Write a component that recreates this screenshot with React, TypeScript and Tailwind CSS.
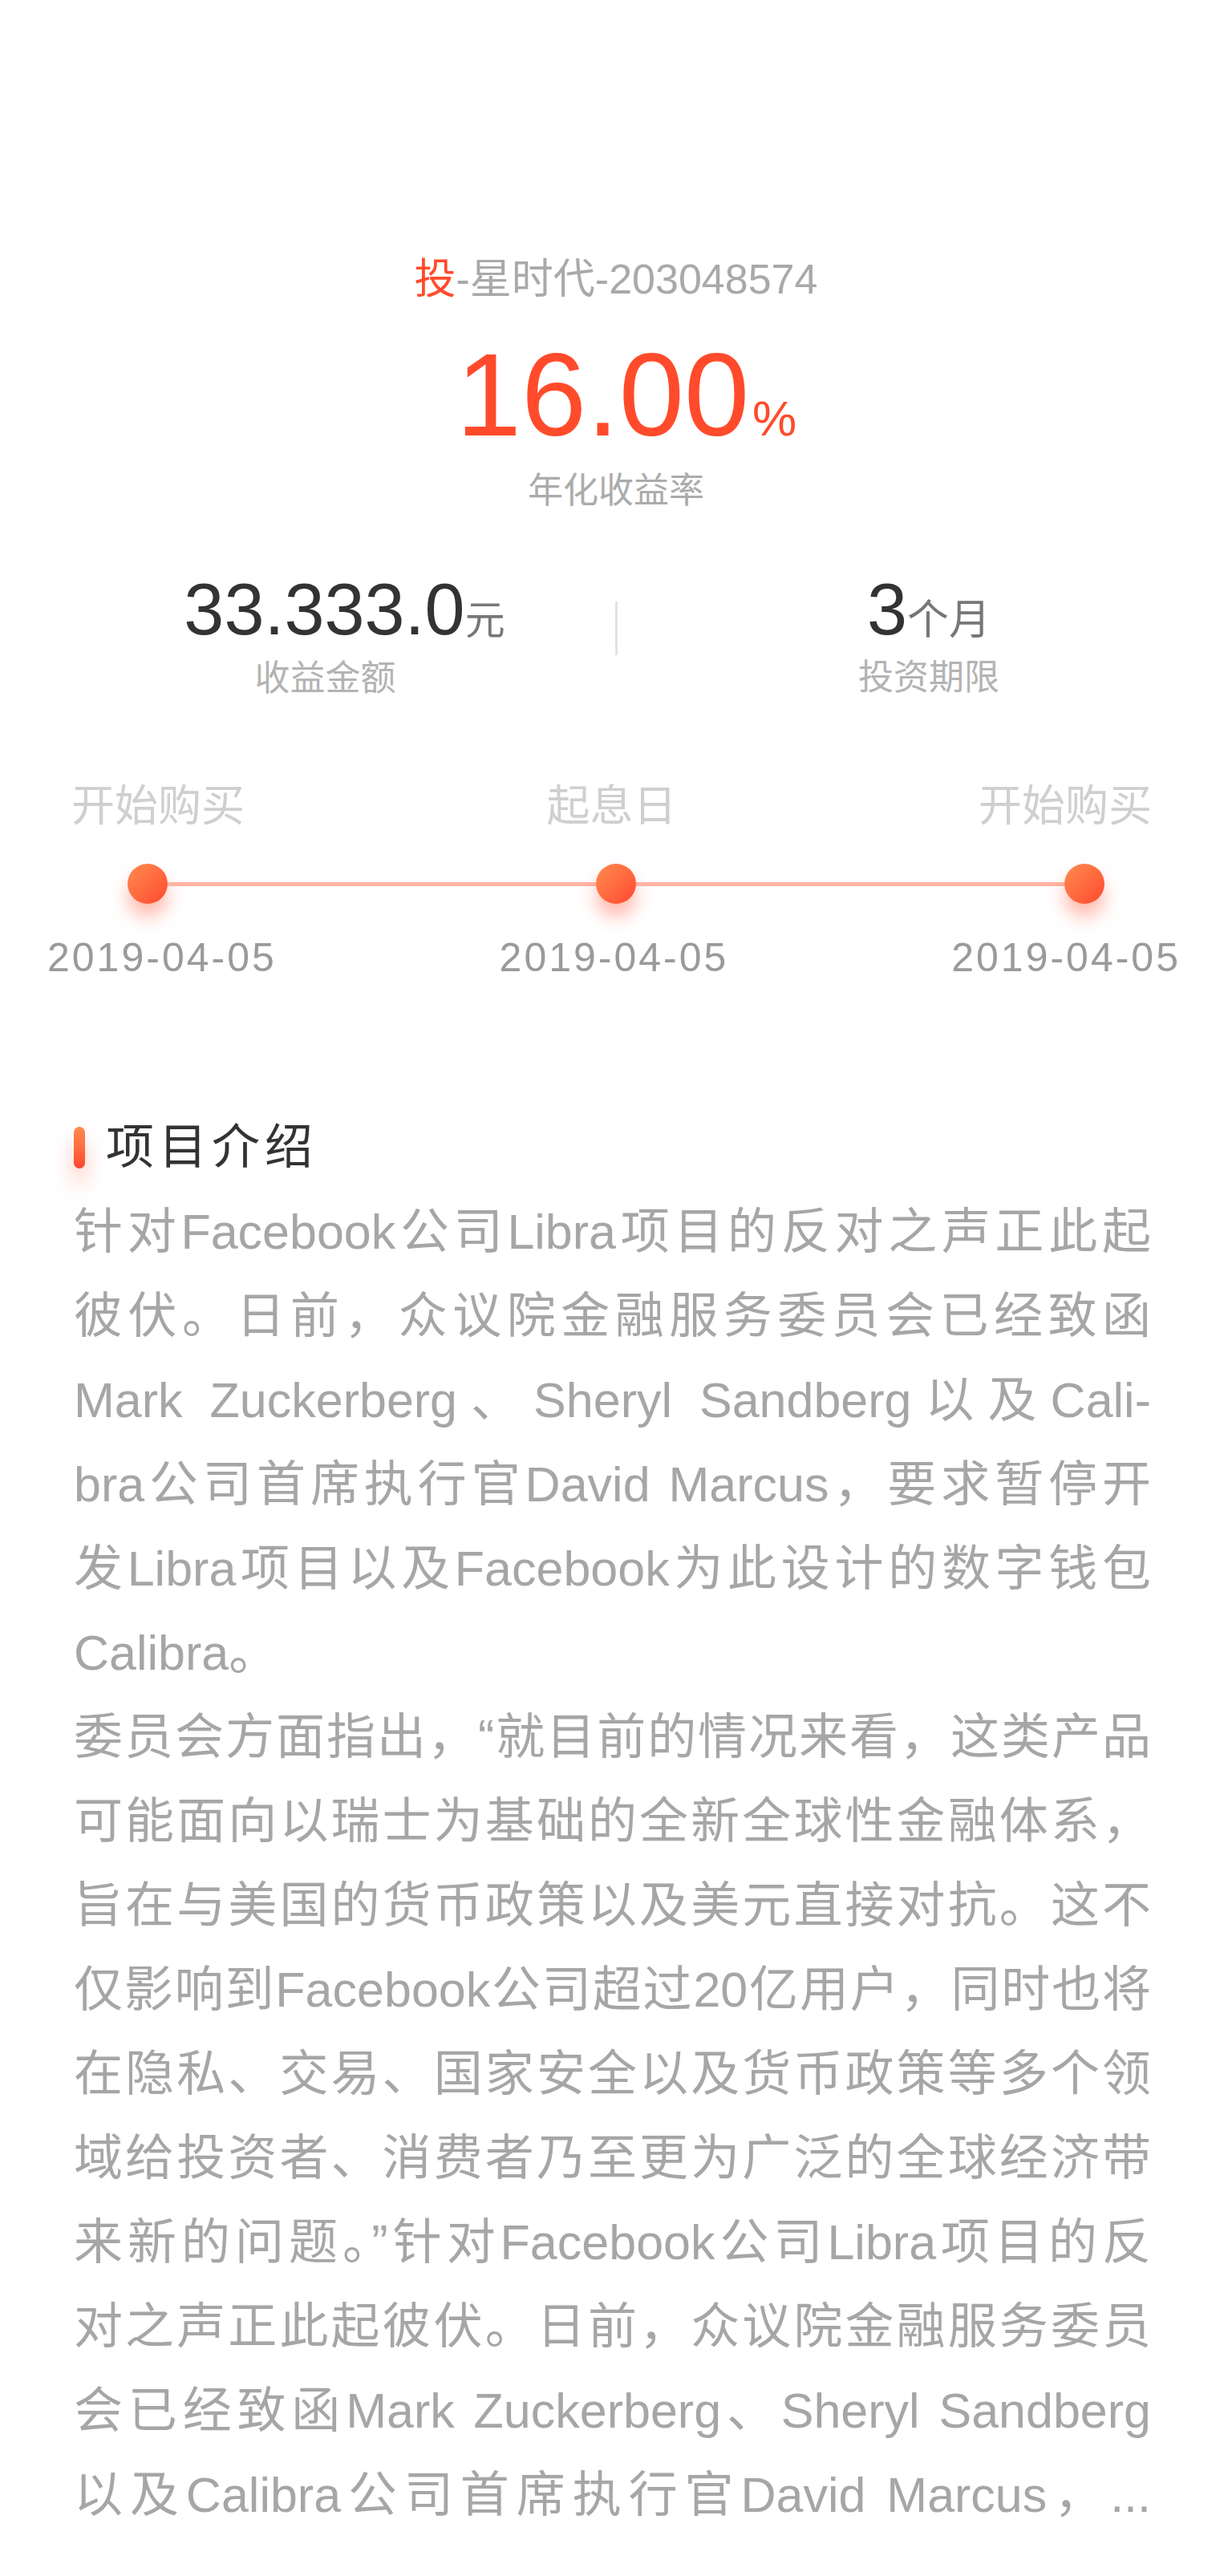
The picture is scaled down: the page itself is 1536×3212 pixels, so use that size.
const body: { text: string; last?: boolean }[] = [
  { text: "针对Facebook公司Libra项目的反对之声正此起" },
  { text: "彼伏。日前，众议院金融服务委员会已经致函" },
  { text: "Mark Zuckerberg、Sheryl Sandberg以及Cali-" },
  { text: "bra公司首席执行官David Marcus，要求暂停开" },
  { text: "发Libra项目以及Facebook为此设计的数字钱包" },
  { text: "Calibra。", last: true },
  { text: "委员会方面指出，“就目前的情况来看，这类产品" },
  { text: "可能面向以瑞士为基础的全新全球性金融体系，" },
  { text: "旨在与美国的货币政策以及美元直接对抗。这不" },
  { text: "仅影响到Facebook公司超过20亿用户，同时也将" },
  { text: "在隐私、交易、国家安全以及货币政策等多个领" },
  { text: "域给投资者、消费者乃至更为广泛的全球经济带" },
  { text: "来新的问题。”针对Facebook公司Libra项目的反" },
  { text: "对之声正此起彼伏。日前，众议院金融服务委员" },
  { text: "会已经致函Mark Zuckerberg、Sheryl Sandberg" },
  { text: "以及Calibra公司首席执行官David Marcus，..." },
]

const steps = [
  { label: "开始购买", date: "2019-04-05" },
  { label: "起息日", date: "2019-04-05" },
  { label: "开始购买", date: "2019-04-05" },
]

function Dot() {
  return (
    <div className="w-[50px] h-[50px] rounded-full bg-gradient-to-br from-[#ff8a4e] to-[#ff4530] shadow-[0_16px_22px_rgba(255,80,50,0.4)] shrink-0" />
  )
}

export default function App() {
  return (
    <div className="min-h-[3212px] bg-white font-['Liberation_Sans','Noto_Sans_CJK_SC',sans-serif]">
      {/* product title */}
      <div className="pt-[318px] text-center text-[52px] leading-[60px] text-[#a9a9a9]">
        <span className="text-[#ff4b2b]">投</span>-星时代-203048574
      </div>

      {/* rate */}
      <div className="mt-[45px] flex justify-center items-baseline leading-[140px] text-[#ff4b2b] pl-[26px]">
        <span className="text-[146px]">16.00</span>
        <span className="text-[62px] ml-[4px]">%</span>
      </div>
      <div className="-mt-[6px] text-center text-[44px] leading-[52px] text-[#ababab]">年化收益率</div>

      {/* stats */}
      <div className="mt-[72px] flex">
        <div className="w-[767px] pl-[60px] flex flex-col items-center">
          <div className="ml-[32px] flex items-baseline leading-[100px]">
            <span className="text-[90px] text-[#333333]">33.333.0</span>
            <span className="text-[50px] text-[#777777]">元</span>
          </div>
          <div className="mr-[16px] -mt-[4px] text-[44px] leading-[52px] text-[#b3b3b3]">收益金额</div>
        </div>
        <div className="w-[3px] h-[67px] mt-[40px] bg-[#e2e2e2]" />
        <div className="flex-1 pl-[10px] flex flex-col items-center">
          <div className="flex items-baseline leading-[100px]">
            <span className="text-[90px] text-[#333333]">3</span>
            <span className="text-[52px] text-[#777777]">个月</span>
          </div>
          <div className="-mt-[4px] text-[44px] leading-[52px] text-[#b3b3b3]">投资期限</div>
        </div>
      </div>

      {/* timeline */}
      <div className="mt-[103px] pl-[89px] pr-[100px] flex justify-between text-[54px] leading-[60px] text-[#cfcfcf]">
        {steps.map((s, i) => (
          <span key={i}>{s.label}</span>
        ))}
      </div>
      <div className="mt-[42px] px-[159px] flex items-center">
        <Dot />
        <div className="flex-1 h-[5px] bg-[#ffb3a3]" />
        <Dot />
        <div className="flex-1 h-[5px] bg-[#ffb3a3]" />
        <Dot />
      </div>
      <div className="mt-[39px] pl-[59px] pr-[64px] flex justify-between text-[50px] leading-[56px] tracking-[3px] text-[#9a9a9a]">
        {steps.map((s, i) => (
          <span key={i}>{s.date}</span>
        ))}
      </div>

      {/* intro */}
      <div className="mt-[174px] pl-[92px] pr-[101px]">
        <div className="flex items-center gap-[26px]">
          <div className="w-[14px] h-[52px] rounded-full bg-gradient-to-b from-[#ff8a4e] to-[#ff4530] shadow-[0_18px_24px_rgba(255,80,50,0.35)]" />
          <h2 className="text-[60px] leading-[70px] tracking-[6px] text-[#333333]">项目介绍</h2>
        </div>
        <div className="mt-[18px] text-[61px] leading-[105px] text-[#a6a6a6]">
          {body.map((l, i) => (
            <div
              key={i}
              className={l.last ? "text-left whitespace-nowrap" : "text-justify [text-align-last:justify] whitespace-nowrap"}
            >
              {l.text}
            </div>
          ))}
        </div>
      </div>
    </div>
  )
}
